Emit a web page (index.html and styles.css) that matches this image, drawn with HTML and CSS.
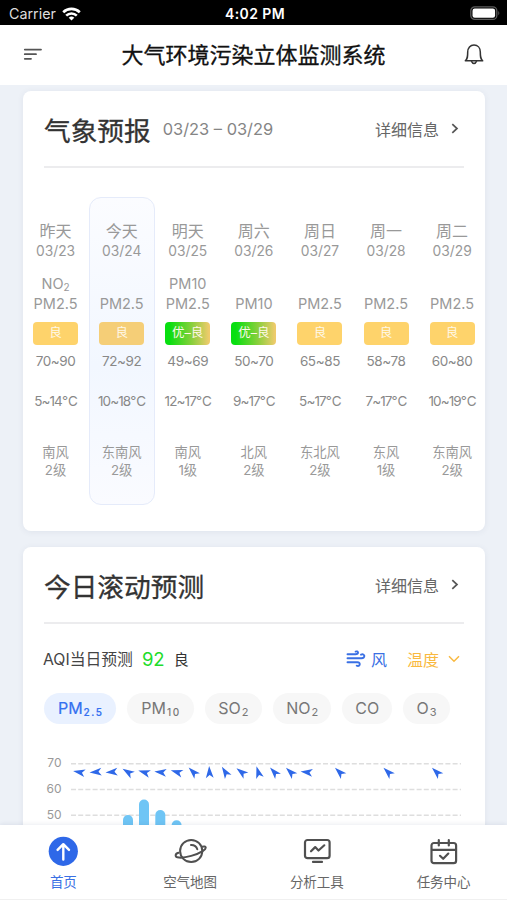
FILE: index.html
```
<!DOCTYPE html>
<html lang="zh-CN">
<head>
<meta charset="utf-8">
<meta name="viewport" content="width=device-width">
<title>大气环境污染立体监测系统</title>
<link rel="stylesheet" href="styles.css">
</head>
<body>
<div class="app">
  <div class="status">
    <div class="carrier"><span>Carrier</span>
      <svg width="19" height="14" viewBox="0 0 19 14" fill="none" stroke="#fff" stroke-width="2.6"><path d="M1.2 5.2a12 12 0 0 1 16.6 0M4.2 8.6a7.6 7.6 0 0 1 10.6 0"/><path d="M9.5 13.6 6.7 10.8a4 4 0 0 1 5.6 0z" fill="#fff" stroke="none"/></svg>
    </div>
    <div class="time">4:02 PM</div>
    <svg class="battery" width="31" height="15" viewBox="0 0 31 15"><rect x=".8" y=".8" width="26" height="12.6" rx="4" fill="none" stroke="#5c5c5c" stroke-width="1.3"/><rect x="2.5" y="2.5" width="22.6" height="9.3" rx="2.2" fill="#fff"/><path d="M28.3 4.9q2 2.200 0 4.400z" fill="#5c5c5c"/></svg>
  </div>
  <header class="header">
    <svg class="menu" width="20" height="14" viewBox="0 0 20 14" stroke="#555" stroke-width="1.8" stroke-linecap="round"><path d="M1.800 1.600H18M1.800 6.200H13M1.800 10.800H8"/></svg>
    <h1>大气环境污染立体监测系统</h1>
    <svg class="bell" width="20" height="22" viewBox="0 0 20 22" fill="none" stroke="#333" stroke-width="1.500" stroke-linejoin="round"><path d="M1.300 16.800C3.600 15 3.700 13 3.700 8.100C3.700 4 6.300 1.100 10 1.100S16.300 4 16.300 8.100C16.300 13 16.400 15 18.700 16.800Z"/><path d="M7.300 17.100Q10 22.100 12.700 17.100"/></svg>
  </header>

  <main class="content">
    <section class="card forecast">
      <div class="card-head">
        <h2>气象预报</h2><span class="range">03/23 – 03/29</span>
        <a class="more">详细信息<svg width="8" height="11" viewBox="0 0 8 11"><path d="M1.300 1.200 6 5.500 1.300 9.800"/></svg></a>
      </div>
      <div class="days">
        <div class="day"><b>昨天</b><i>03/23</i><div class="pol"><span>NO<sub>2</sub></span><span>PM2.5</span></div><em class="tag">良</em><span class="aqi">70~90</span><span class="temp">5~14℃</span><div class="wind"><span>南风</span><span>2级</span></div></div>
        <div class="day today"><b>今天</b><i>03/24</i><div class="pol"><span>PM2.5</span></div><em class="tag">良</em><span class="aqi">72~92</span><span class="temp">10~18℃</span><div class="wind"><span>东南风</span><span>2级</span></div></div>
        <div class="day"><b>明天</b><i>03/25</i><div class="pol"><span>PM10</span><span>PM2.5</span></div><em class="tag mixed">优–良</em><span class="aqi">49~69</span><span class="temp">12~17℃</span><div class="wind"><span>南风</span><span>1级</span></div></div>
        <div class="day"><b>周六</b><i>03/26</i><div class="pol"><span>PM10</span></div><em class="tag mixed">优–良</em><span class="aqi">50~70</span><span class="temp">9~17℃</span><div class="wind"><span>北风</span><span>2级</span></div></div>
        <div class="day"><b>周日</b><i>03/27</i><div class="pol"><span>PM2.5</span></div><em class="tag">良</em><span class="aqi">65~85</span><span class="temp">5~17℃</span><div class="wind"><span>东北风</span><span>2级</span></div></div>
        <div class="day"><b>周一</b><i>03/28</i><div class="pol"><span>PM2.5</span></div><em class="tag">良</em><span class="aqi">58~78</span><span class="temp">7~17℃</span><div class="wind"><span>东风</span><span>1级</span></div></div>
        <div class="day"><b>周二</b><i>03/29</i><div class="pol"><span>PM2.5</span></div><em class="tag">良</em><span class="aqi">60~80</span><span class="temp">10~19℃</span><div class="wind"><span>东南风</span><span>2级</span></div></div>
      </div>
    </section>

    <section class="card rolling">
      <div class="card-head">
        <h2>今日滚动预测</h2>
        <a class="more">详细信息<svg width="8" height="11" viewBox="0 0 8 11"><path d="M1.300 1.200 6 5.500 1.300 9.800"/></svg></a>
      </div>
      <div class="summary">
        <span class="label">AQI当日预测</span><span class="value">92</span><span class="level">良</span>
        <span class="windkey"><svg width="20" height="18" viewBox="0 0 20 18" fill="none" stroke="#3a70e4" stroke-width="1.900" stroke-linecap="round"><path d="M1.500 4.200H9.500Q12 4.200 12 2.500Q11.500.9 9.600 1.600M1.500 8.200H15.500Q18.600 8 18.300 5.700Q17.400 3.500 15 4.700M1.500 12.200H11.500Q14 12.400 13.700 14.600Q12.900 16.700 10.700 15.700"/></svg>风</span>
        <span class="tempkey">温度<svg width="12" height="8" viewBox="0 0 12 8" fill="none" stroke="#f9b940" stroke-width="1.500"><path d="M1 1.300 6 6.200 11 1.300"/></svg></span>
      </div>
      <div class="chips">
        <span class="chip c1 on">PM<sub>2.5</sub></span><span class="chip c2">PM<sub>10</sub></span><span class="chip c3">SO<sub>2</sub></span><span class="chip c4">NO<sub>2</sub></span><span class="chip c5">CO</span><span class="chip c6">O<sub>3</sub></span>
      </div>
      <svg class="chart" width="462" height="90" viewBox="23 750 462 90">
        <defs><path id="arrow" d="M0-7 3.900 5 0 2-3.900 5Z"/></defs>
        <g class="grid"><path d="M71 763.700H461M71 789.500H461M71 815.300H461"/></g>
        <g class="ticks"><text x="61.500" y="767">70</text><text x="61.500" y="793">60</text><text x="61.500" y="819">50</text></g>
        <g fill="#6fc5f5"><rect x="123" y="815" width="10" height="40" rx="5"/><rect x="139" y="799.500" width="10" height="50" rx="5"/><rect x="155.300" y="810" width="10" height="40" rx="5"/><rect x="171.600" y="820.300" width="10" height="40" rx="5"/></g>
        <g fill="#2e68e8">
          <use href="#arrow" transform="translate(80 772.300) rotate(-79)"/>
          <use href="#arrow" transform="translate(96.500 772) rotate(-94)"/>
          <use href="#arrow" transform="translate(112.500 772) rotate(-94)"/>
          <use href="#arrow" transform="translate(128.500 772.500) rotate(-58)"/>
          <use href="#arrow" transform="translate(145 772.500) rotate(-74)"/>
          <use href="#arrow" transform="translate(161.300 772.300) rotate(-84)"/>
          <use href="#arrow" transform="translate(177.500 772.300) rotate(-74)"/>
          <use href="#arrow" transform="translate(193.600 772.500) rotate(-45)"/>
          <use href="#arrow" transform="translate(209.500 773) rotate(-3)"/>
          <use href="#arrow" transform="translate(225.600 772.600) rotate(-32)"/>
          <use href="#arrow" transform="translate(242 772.500) rotate(-52)"/>
          <use href="#arrow" transform="translate(258.500 773) rotate(-17)"/>
          <use href="#arrow" transform="translate(274.700 772.600) rotate(-42)"/>
          <use href="#arrow" transform="translate(291 772.600) rotate(-46)"/>
          <use href="#arrow" transform="translate(307.500 772.300) rotate(-83)"/>
          <use href="#arrow" transform="translate(340 772.600) rotate(-46)"/>
          <use href="#arrow" transform="translate(388.500 772.600) rotate(-46)"/>
          <use href="#arrow" transform="translate(437 772.600) rotate(-46)"/>
        </g>
      </svg>
    </section>
  </main>

  <nav class="tabs">
    <a class="tab active"><svg width="32" height="32" viewBox="0 0 32 32"><circle cx="16.300" cy="16.300" r="14.600" fill="#2e68e8"/><path d="M16.300 24.500V9.500M10.600 14.900 16.300 9.200l5.700 5.700" fill="none" stroke="#fff" stroke-width="2.400" stroke-linecap="round" stroke-linejoin="round"/></svg><span>首页</span></a>
    <a class="tab"><svg width="34" height="32" viewBox="0 0 34 32" fill="none" stroke="#505050" stroke-width="2" stroke-linecap="round"><circle cx="18.200" cy="16" r="11.100"/><path d="M29 11.800C33.500 10.600 34 13.200 30 15.800C24 19.700 12.500 23.200 6 22.600C1.300 22.100 2 18.700 5.500 17.800M18 10C21.200 9.900 23.500 11.600 24.300 14.200"/></svg><span>空气地图</span></a>
    <a class="tab"><svg width="32" height="32" viewBox="0 0 32 32" fill="none" stroke="#505050" stroke-width="2.200" stroke-linecap="round" stroke-linejoin="round"><rect x="4" y="5" width="24.600" height="18.200" rx="2.500"/><path d="M10 16.300 14.200 12.100 17.500 15.500 23.300 10.300M12 26.900H21"/></svg><span>分析工具</span></a>
    <a class="tab"><svg width="32" height="32" viewBox="0 0 32 32" fill="none" stroke="#505050" stroke-width="2.200" stroke-linecap="round" stroke-linejoin="round"><rect x="3.500" y="8" width="24.600" height="20.200" rx="2.500"/><path d="M4 14.800H28M10.800 5.200V10.500M20.800 5.200V10.500M12 20.800 15.200 23.800 20.300 18.600"/></svg><span>任务中心</span></a>
  </nav>
</div>
</body>
</html>
```

FILE: styles.css
```
* { box-sizing: border-box; }
body { margin: 0; background: #edf1f7; font-family: Inter, "Noto Sans CJK SC", sans-serif; color: #333; }
.app { display: flex; flex-direction: column; width: 507px; height: 900px; overflow: hidden; }
h1, h2 { margin: 0; font-weight: 400; white-space: nowrap; }
svg { display: block; flex: none; }

.status { display: grid; grid-template-columns: 1fr auto 1fr; align-items: center; flex: none; height: 25px; padding: 2px 6px 0 9px; background: #000; color: #fff; }
.carrier { display: flex; gap: 6px; align-items: center; font-size: 14.300px; color: #ddd; }
.time { font-size: 14px; font-weight: 600; letter-spacing: .4px; }
.battery { justify-self: end; }

.header { display: flex; align-items: center; justify-content: space-between; flex: none; height: 60px; padding: 0 23px 1px; background: #fff; }
.header h1 { font-size: 22px; line-height: 30px; color: #111; -webkit-text-stroke: .3px #111; }

.content { flex: 1; min-height: 0; padding: 6px 22px 0 23px; overflow: hidden; }
.card { background: #fff; border-radius: 8px; box-shadow: 0 1px 6px rgba(60, 80, 120, .08); }
.forecast { height: 440px; margin-bottom: 16px; }
.rolling { height: 300px; }
.card-head { display: flex; align-items: center; height: 77px; margin: 0 21px; border-bottom: 2px solid #ececee; }
.card-head h2 { padding-top: 5px; font-size: 26.700px; line-height: 36px; -webkit-text-stroke: .3px #333; }
.range { margin-left: 12px; font-size: 16.400px; color: #858585; }
.more { display: flex; align-items: center; gap: 12px; margin-left: auto; padding-right: 5px; font-size: 16px; color: #666; }
.more path { fill: none; stroke: #555; stroke-width: 1.700; }

.days { display: grid; grid-template-columns: repeat(7, 66.100px); margin: 29px 0 0 -.5px; color: #999; font-size: 13.500px; }
.day { display: flex; flex-direction: column; align-items: center; height: 308px; padding-top: 22px; border: 1.500px solid transparent; border-radius: 12px; white-space: nowrap; }
.today { border-color: #e5ebfa; background: linear-gradient(#fbfcff, #f2f7ff 55%, #fafbff); }
.day b { font-weight: 400; font-size: 16px; line-height: 22px; }
.day i { font-style: normal; font-size: 13.800px; line-height: 18px; }
.pol { display: flex; flex-direction: column; justify-content: flex-end; align-items: center; height: 39px; margin-top: 14px; font-size: 14.500px; }
.pol span { height: 19.500px; line-height: 19.500px; }
.pol sub { font-size: 10px; line-height: 0; vertical-align: -2px; }
.tag { width: 45px; height: 23px; margin-top: 8.500px; border-radius: 4px; background: #fed36b; color: #fff8e8; font-style: normal; font-size: 12.500px; line-height: 22px; text-align: center; }
.today .tag { background: #f5ce77; }
.mixed { background: linear-gradient(90deg, #08df10 10%, #8acf3c 60%, #efcb6c 98%); }
.aqi { margin-top: 7px; font-size: 13.500px; letter-spacing: -.4px; line-height: 18px; color: #888; }
.temp { margin-top: 22px; font-size: 13.500px; letter-spacing: -.9px; line-height: 18px; color: #888; }
.wind { display: flex; flex-direction: column; align-items: center; margin-top: 33px; font-size: 13.300px; line-height: 18px; }

.summary { display: flex; align-items: center; height: 69px; margin: 0 21px 0 20px; font-size: 16px; }
.label { font-size: 15.800px; color: #444; }
.value { margin-left: 9px; font-size: 18.500px; color: #22dc2a; }
.level { margin-left: 9px; font-size: 15px; }
.windkey { display: flex; align-items: center; gap: 5px; margin-left: auto; color: #3a70e4; }
.tempkey { display: flex; align-items: center; gap: 9px; margin: 0 4px 0 20px; color: #f9b940; }

.chips { display: flex; gap: 10.800px; margin-left: 21px; }
.chip { height: 31px; border-radius: 16px; background: #f7f7f7; color: #777; font-size: 16px; line-height: 30px; text-align: center; white-space: nowrap; }
.chip sub { margin-left: 1px; font-size: 11px; line-height: 0; vertical-align: -2px; }
.c1 { width: 72px; } .c2 { width: 67px; } .c3 { width: 57.500px; } .c4 { width: 58.500px; } .c5 { width: 50px; } .c6 { width: 47px; }
.c1 sub, .c2 sub { font-size: 10px; letter-spacing: 1.600px; margin-right: -1.600px; font-weight: 500; }
.on { background: #e9f1ff; color: #3470f0; -webkit-text-stroke: .2px #3470f0; }

.chart { margin-top: 26px; }
.grid path { fill: none; stroke: #dedede; stroke-width: 1.500; stroke-dasharray: 5 2.200; }
.ticks { fill: #999; font-size: 12px; text-anchor: end; }

.tabs { position: relative; display: grid; grid-template-columns: repeat(4, 1fr); flex: none; height: 75px; background: #fff; border-bottom: 1px solid #f0f0f0; box-shadow: 0 -1px 4px rgba(60, 80, 120, .1); }
.tab { display: flex; flex-direction: column; align-items: center; padding-top: 10px; color: #666; font-size: 13.500px; }
.tab span { margin-top: 5px; line-height: 20px; }
.active { color: #3a70e4; }
```
